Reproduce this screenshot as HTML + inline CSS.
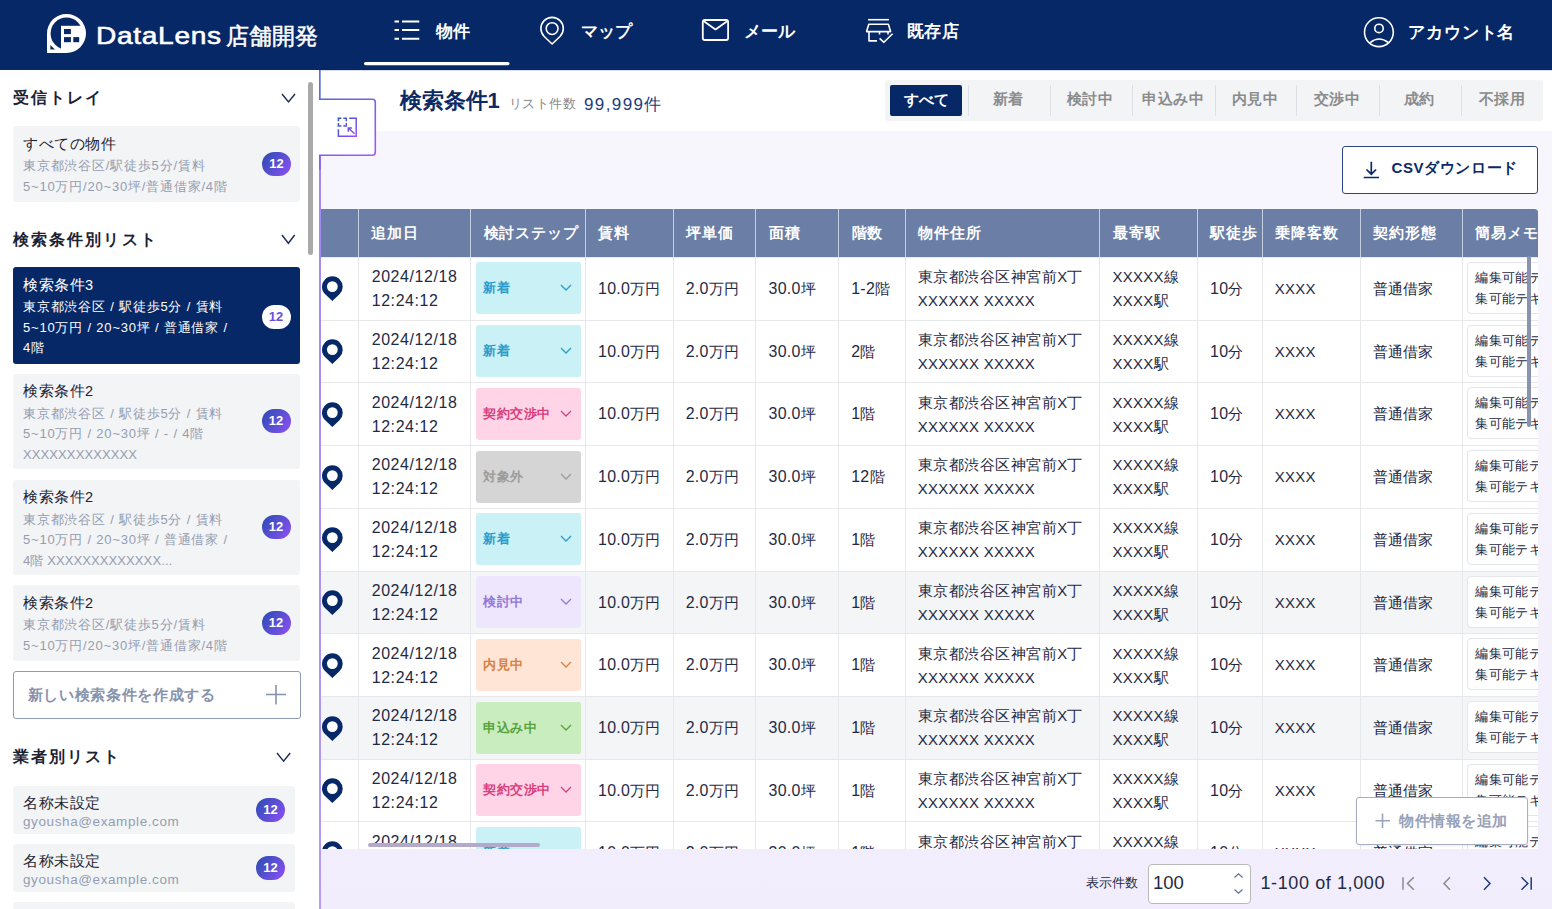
<!DOCTYPE html>
<html lang="ja">
<head>
<meta charset="utf-8">
<style>
*{box-sizing:border-box;margin:0;padding:0}
html,body{width:1552px;height:909px;overflow:hidden;background:#fff}
body{font-family:"Liberation Sans",sans-serif;color:#1f2a44;position:relative}
.abs{position:absolute}
/* header */
#hdr{position:absolute;left:0;top:0;width:1552px;height:70px;background:#062867}
#hdr .t{position:absolute;color:#fff;font-weight:bold;font-size:17px;line-height:20px;white-space:nowrap}
#hdr svg{position:absolute}
/* sidebar */
#side{position:absolute;left:0;top:70px;width:320px;height:839px;background:#fff;overflow:hidden}
.sh{position:absolute;left:13px;font-size:16px;font-weight:bold;color:#1b2233;letter-spacing:2.1px;line-height:20px;white-space:nowrap;margin-top:1px}
.chev{position:absolute}
.card{position:absolute;left:13px;width:287px;background:#f3f4f6;border-radius:3px}
.card .ct{position:absolute;left:10px;top:7.5px;font-size:14.5px;line-height:20px;color:#1e2533;white-space:nowrap;letter-spacing:0.5px}
.card .cl{position:absolute;left:10px;font-size:13px;line-height:20.5px;color:#939db1;white-space:nowrap;letter-spacing:0.8px}
.badge{position:absolute;width:29px;height:24px;border-radius:12px;background:linear-gradient(125deg,#2b4caf 0%,#5a4fd3 50%,#9050f8 100%);color:#fff;font-weight:bold;font-size:13px;line-height:24px;text-align:center}
.card.act{background:#062867}
.card.act .ct{color:#fff}
.card.act .cl{color:#fff}
.card.act .badge{background:#fff;color:#6b4fd8}
/* main */
#main{position:absolute;left:320px;top:70px;width:1232px;height:839px;background:linear-gradient(180deg,#f8f6fd 0px,#f8f6fd 70px,#f1edfc 839px);overflow:hidden}
.th{top:15.5px;font-size:14.5px;line-height:18px;font-weight:bold;color:#fff;white-space:nowrap;letter-spacing:0.8px}
.td{font-size:14.5px;line-height:22px;color:#1f2a44;white-space:nowrap;letter-spacing:0}
.td2{font-size:14.5px;line-height:24px;letter-spacing:0.5px;color:#1f2a44;white-space:nowrap}
.dt .l{letter-spacing:0.6px!important}
.l{font-size:1.1em}
.td .lx,.td2 .lx{font-size:1.03em;letter-spacing:0.2px}
.td .l,.td2 .l{letter-spacing:0.3px}
.pill{width:105px;height:52px;border-radius:3px;font-size:13px;font-weight:bold;line-height:52px;padding-left:7.5px;white-space:nowrap;letter-spacing:0.4px}
.memo{width:200px;height:52px;border:1.2px solid #e4e6ea;border-radius:4px;background:#fff;font-size:13px;line-height:21px;padding:4px 0 0 6.8px;color:#1f2a44;letter-spacing:0.4px;white-space:nowrap}
</style>
</head>
<body>
<div id="hdr">
<svg width="1552" height="70" style="left:0;top:0">
 <defs><clipPath id="lc"><circle cx="66.5" cy="33.4" r="18"/></clipPath></defs>
 <path d="M47,53.1 L47,33.4 A19.5,19.5 0 1 1 66.5,52.9 Z" fill="#fff"/>
 <circle cx="66.5" cy="33.4" r="15.9" fill="#062867"/>
 <rect x="61" y="25.8" width="30" height="30" fill="#fff" clip-path="url(#lc)"/>
 <rect x="64" y="29" width="6.9" height="5.1" fill="#062867"/>
 <rect x="64" y="37.1" width="6.9" height="5.1" fill="#062867"/>
 <rect x="73.3" y="37.1" width="5.9" height="5.1" fill="#062867"/>
 <path d="M50.4,45.1 L50.4,49.6 L54.9,49.6 Z" fill="#062867"/>
 <g stroke="#fff" stroke-width="2" fill="none">
  <path d="M394.5,21.5H399M402,21.5H419.3M394.5,30H399M402,30H419.3M394.5,38.7H399M402,38.7H419.3"/>
 </g>
 <rect x="364" y="62" width="145.5" height="3.2" rx="1.6" fill="#fff"/>
 <g stroke="#fff" stroke-width="1.6" fill="none">
  <path d="M552.1,44 L544.2,36.5 A11.2,11.2 0 1 1 560,36.5 Z" stroke-linejoin="round"/>
  <circle cx="552.1" cy="28.6" r="5.9"/>
 </g>
 <g stroke="#fff" stroke-width="1.8" fill="none" stroke-linejoin="round">
  <rect x="702.8" y="20" width="25.3" height="20" rx="2"/>
  <path d="M703.5,21 L715.5,29.4 L727.5,21"/>
 </g>
 <g stroke="#fff" stroke-width="1.6" fill="none" stroke-linejoin="round">
  <path d="M868,19.7H889"/>
  <path d="M868.8,24.3H888.4L890.6,31.6H866.6Z"/>
  <path d="M879.5,31.6V34.5M888,31.6V34.5"/>
  <path d="M869,31.6V40.9H877"/>
  <path d="M879.6,38.3L883.9,42.3L892.6,33.8"/>
 </g>
 <g stroke="#fff" stroke-width="1.6" fill="none">
  <circle cx="1378.9" cy="32.2" r="14.4"/>
  <circle cx="1379" cy="28.4" r="4.2"/>
  <path d="M1370.3,42.6 Q1379,35.5 1388.3,42.6"/>
 </g>
</svg>
<div class="t" style="left:96px;top:21.5px;font-size:24px;line-height:28px;letter-spacing:0.6px;font-weight:normal;-webkit-text-stroke:0.6px #fff;transform:scaleX(1.17);transform-origin:0 0">DataLens</div><div class="t" style="left:226px;top:23px;font-size:22.5px;line-height:28px;font-weight:normal;-webkit-text-stroke:0.5px #fff">店舗開発</div>
<div class="t" style="left:435.5px;top:22px;letter-spacing:0.3px">物件</div>
<div class="t" style="left:580.5px;top:21.5px;letter-spacing:0.3px">マップ</div>
<div class="t" style="left:744px;top:21.5px;letter-spacing:0.2px">メール</div>
<div class="t" style="left:906.5px;top:21.5px;letter-spacing:0.6px">既存店</div>
<div class="t" style="left:1408px;top:22.5px;letter-spacing:0.9px">アカウント名</div>
</div>
<div id="side">
<div class="abs" style="left:307.5px;top:12px;width:5.5px;height:172.5px;border-radius:3px;background:#a9a9a9"></div>
<div class="sh" style="top:17px">受信トレイ</div>
<svg class="chev" style="left:280px;top:21.6px" width="17" height="12.0"><path d="M2,2 L8.5,10.0 L15,2" stroke="#1b2a55" stroke-width="1.4" fill="none"/></svg>
<div class="card" style="top:56px;height:75.6px"><div class="ct">すべての物件</div>
<div class="cl" style="top:30px">東京都渋谷区/駅徒歩5分/賃料</div><div class="cl" style="top:51px">5~10万円/20~30坪/普通借家/4階</div>
<div class="badge" style="left:249px;top:26px">12</div></div>
<div class="sh" style="top:159px">検索条件別リスト</div>
<svg class="chev" style="left:280px;top:163px" width="16.69999999999999" height="12.300000000000011"><path d="M2,2 L8.349999999999994,10.300000000000011 L14.699999999999989,2" stroke="#1b2a55" stroke-width="1.4" fill="none"/></svg>
<div class="card act" style="top:197.4px;height:96.3px"><div class="ct">検索条件3</div>
<div class="cl" style="top:30px">東京都渋谷区 / 駅徒歩5分 / 賃料</div><div class="cl" style="top:50.5px">5~10万円 / 20~30坪 / 普通借家 /</div><div class="cl" style="top:71px">4階</div>
<div class="badge" style="left:248.5px;top:37.6px">12</div></div>
<div class="card" style="top:303.9px;height:95px"><div class="ct">検索条件2</div>
<div class="cl" style="top:30px">東京都渋谷区 / 駅徒歩5分 / 賃料</div><div class="cl" style="top:50.5px">5~10万円 / 20~30坪 / - / 4階</div><div class="cl" style="top:71px;letter-spacing:0.1px">XXXXXXXXXXXXX</div>
<div class="badge" style="left:248.5px;top:35.6px">12</div></div>
<div class="card" style="top:409.5px;height:95.7px"><div class="ct">検索条件2</div>
<div class="cl" style="top:30px">東京都渋谷区 / 駅徒歩5分 / 賃料</div><div class="cl" style="top:50.5px">5~10万円 / 20~30坪 / 普通借家 /</div><div class="cl" style="top:71px;letter-spacing:0.1px">4階 XXXXXXXXXXXXX...</div>
<div class="badge" style="left:248.5px;top:35.6px">12</div></div>
<div class="card" style="top:515.4px;height:75.6px"><div class="ct">検索条件2</div>
<div class="cl" style="top:30px">東京都渋谷区/駅徒歩5分/賃料</div><div class="cl" style="top:51px">5~10万円/20~30坪/普通借家/4階</div>
<div class="badge" style="left:248.5px;top:26px">12</div></div>
<div class="abs" style="left:13px;top:601px;width:287.5px;height:48px;border:1.3px solid #8c9ab5;border-radius:3px"></div>
<div class="abs" style="left:27.5px;top:615px;font-size:14.5px;line-height:20px;color:#8792ab;font-weight:bold;letter-spacing:0.7px;white-space:nowrap">新しい検索条件を作成する</div>
<svg class="abs" style="left:264px;top:613px" width="24" height="24"><path d="M12,2V21.5M2,11.5H22" stroke="#8592ad" stroke-width="1.6" fill="none"/></svg>
<div class="sh" style="top:676px">業者別リスト</div>
<svg class="chev" style="left:274.7px;top:680.6px" width="17.19999999999999" height="12.199999999999932"><path d="M2,2 L8.599999999999994,10.199999999999932 L15.199999999999989,2" stroke="#1b2a55" stroke-width="1.4" fill="none"/></svg>
<div class="card" style="top:715.5px;width:282px;height:48.3px"><div class="ct" style="top:7px">名称未設定</div>
<div class="cl" style="top:26px;font-size:13.5px;letter-spacing:0.6px">gyousha@example.com</div>
<div class="badge" style="left:243px;top:12px">12</div></div>
<div class="card" style="top:774.1px;width:282px;height:48.3px"><div class="ct" style="top:7px">名称未設定</div>
<div class="cl" style="top:26px;font-size:13.5px;letter-spacing:0.6px">gyousha@example.com</div>
<div class="badge" style="left:243px;top:12px">12</div></div>
<div class="card" style="top:832px;width:282px;height:48.3px"><div class="ct" style="top:7px">名称未設定</div>
<div class="cl" style="top:26px;font-size:13.5px;letter-spacing:0.6px">gyousha@example.com</div>
<div class="badge" style="left:243px;top:12px">12</div></div>
</div>
<div id="main">
<div class="abs" style="left:0;top:0;width:1232px;height:60.8px;background:#fff"></div>
<div class="abs" style="left:0;top:0;width:1232px;height:1px;background:#d9dce6"></div>



<div class="abs" style="left:79.5px;top:18px;font-size:22px;line-height:26px;font-weight:bold;color:#0b2a66;white-space:nowrap">検索条件1</div>
<div class="abs" style="left:188.5px;top:25.5px;font-size:13px;line-height:16px;color:#8a8a8a;letter-spacing:0.5px;white-space:nowrap">リスト件数</div>
<div class="abs" style="left:264px;top:25px;font-size:17px;line-height:20px;color:#1d3b7c;letter-spacing:1.4px;white-space:nowrap">99,999件</div>
<div class="abs" style="left:565px;top:10px;width:658px;height:41px;background:#f3f4f6;border-radius:3px"></div>
<div class="abs" style="left:647.5px;top:15px;width:1px;height:31px;background:#dde0e6"></div>
<div class="abs" style="left:730px;top:15px;width:1px;height:31px;background:#dde0e6"></div>
<div class="abs" style="left:812px;top:15px;width:1px;height:31px;background:#dde0e6"></div>
<div class="abs" style="left:895px;top:15px;width:1px;height:31px;background:#dde0e6"></div>
<div class="abs" style="left:976px;top:15px;width:1px;height:31px;background:#dde0e6"></div>
<div class="abs" style="left:1059px;top:15px;width:1px;height:31px;background:#dde0e6"></div>
<div class="abs" style="left:1141px;top:15px;width:1px;height:31px;background:#dde0e6"></div>
<div class="abs" style="left:570px;top:14.5px;width:72px;height:31.5px;background:#062867;border-radius:2px;color:#fff;font-weight:bold;font-size:15px;line-height:29.5px;text-align:center">すべて</div>
<div class="abs" style="left:638px;top:14.5px;width:100px;height:31.5px;color:#8b8b8b;font-weight:bold;font-size:14.5px;line-height:29.5px;letter-spacing:0.5px;text-align:center">新着</div>
<div class="abs" style="left:720px;top:14.5px;width:100px;height:31.5px;color:#8b8b8b;font-weight:bold;font-size:14.5px;line-height:29.5px;letter-spacing:0.5px;text-align:center">検討中</div>
<div class="abs" style="left:803px;top:14.5px;width:100px;height:31.5px;color:#8b8b8b;font-weight:bold;font-size:14.5px;line-height:29.5px;letter-spacing:0.5px;text-align:center">申込み中</div>
<div class="abs" style="left:885px;top:14.5px;width:100px;height:31.5px;color:#8b8b8b;font-weight:bold;font-size:14.5px;line-height:29.5px;letter-spacing:0.5px;text-align:center">内見中</div>
<div class="abs" style="left:967px;top:14.5px;width:100px;height:31.5px;color:#8b8b8b;font-weight:bold;font-size:14.5px;line-height:29.5px;letter-spacing:0.5px;text-align:center">交渉中</div>
<div class="abs" style="left:1049px;top:14.5px;width:100px;height:31.5px;color:#8b8b8b;font-weight:bold;font-size:14.5px;line-height:29.5px;letter-spacing:0.5px;text-align:center">成約</div>
<div class="abs" style="left:1132px;top:14.5px;width:100px;height:31.5px;color:#8b8b8b;font-weight:bold;font-size:14.5px;line-height:29.5px;letter-spacing:0.5px;text-align:center">不採用</div>
<div class="abs" style="left:1022.4px;top:75.7px;width:195.8px;height:48.2px;background:#fff;border:1.5px solid #2d4682;border-radius:3px"></div>
<svg class="abs" style="left:1043px;top:91px" width="18" height="18"><g fill="none" stroke="#0b2a66" stroke-width="1.7"><path d="M8.3,0.7V13M3.5,8.5L8.3,13.2L13.1,8.5M0.7,16.5H16"/></g></svg>
<div class="abs" style="left:1071.5px;top:88px;font-size:15px;line-height:20px;font-weight:bold;color:#0b2a66;letter-spacing:0.6px;white-space:nowrap">CSVダウンロード</div>
<div id="tbl" class="abs" style="left:0.8000000000000114px;top:138.8px;width:1217.7px;height:640.5px;overflow:hidden;border-top-right-radius:3.5px;background:#fff">
<div class="abs" style="left:0;top:0;width:1400px;height:48.2px;background:#6a7ea6"></div>
<div class="abs" style="left:36.89999999999998px;top:0;width:1px;height:48.2px;background:#c5cde0"></div>
<div class="abs" style="left:149.39999999999998px;top:0;width:1px;height:48.2px;background:#c5cde0"></div>
<div class="abs" style="left:264.2px;top:0;width:1px;height:48.2px;background:#c5cde0"></div>
<div class="abs" style="left:351.90000000000003px;top:0;width:1px;height:48.2px;background:#c5cde0"></div>
<div class="abs" style="left:434.7px;top:0;width:1px;height:48.2px;background:#c5cde0"></div>
<div class="abs" style="left:517.4000000000001px;top:0;width:1px;height:48.2px;background:#c5cde0"></div>
<div class="abs" style="left:583.9000000000001px;top:0;width:1px;height:48.2px;background:#c5cde0"></div>
<div class="abs" style="left:778.7px;top:0;width:1px;height:48.2px;background:#c5cde0"></div>
<div class="abs" style="left:876.2px;top:0;width:1px;height:48.2px;background:#c5cde0"></div>
<div class="abs" style="left:940.9000000000001px;top:0;width:1px;height:48.2px;background:#c5cde0"></div>
<div class="abs" style="left:1039.2px;top:0;width:1px;height:48.2px;background:#c5cde0"></div>
<div class="abs" style="left:1140.9px;top:0;width:1px;height:48.2px;background:#c5cde0"></div>
<div class="th abs" style="left:50.39999999999998px">追加日</div>
<div class="th abs" style="left:162.89999999999998px">検討ステップ</div>
<div class="th abs" style="left:277.7px">賃料</div>
<div class="th abs" style="left:365.40000000000003px">坪単価</div>
<div class="th abs" style="left:448.2px">面積</div>
<div class="th abs" style="left:530.9000000000001px">階数</div>
<div class="th abs" style="left:597.4000000000001px">物件住所</div>
<div class="th abs" style="left:792.2px">最寄駅</div>
<div class="th abs" style="left:889.7px">駅徒歩</div>
<div class="th abs" style="left:954.4000000000001px">乗降客数</div>
<div class="th abs" style="left:1052.7px">契約形態</div>
<div class="th abs" style="left:1154.4px">簡易メモ</div>
<div class="abs" style="left:0;top:48.2px;width:1400px;height:62.72px;background:#fff;border-top:1px solid #e6e8ec"></div>
<div class="abs" style="left:36.89999999999998px;top:48.2px;width:1px;height:62.72px;background:#e6e8ec"></div>
<div class="abs" style="left:149.39999999999998px;top:48.2px;width:1px;height:62.72px;background:#e6e8ec"></div>
<div class="abs" style="left:264.2px;top:48.2px;width:1px;height:62.72px;background:#e6e8ec"></div>
<div class="abs" style="left:351.90000000000003px;top:48.2px;width:1px;height:62.72px;background:#e6e8ec"></div>
<div class="abs" style="left:434.7px;top:48.2px;width:1px;height:62.72px;background:#e6e8ec"></div>
<div class="abs" style="left:517.4000000000001px;top:48.2px;width:1px;height:62.72px;background:#e6e8ec"></div>
<div class="abs" style="left:583.9000000000001px;top:48.2px;width:1px;height:62.72px;background:#e6e8ec"></div>
<div class="abs" style="left:778.7px;top:48.2px;width:1px;height:62.72px;background:#e6e8ec"></div>
<div class="abs" style="left:876.2px;top:48.2px;width:1px;height:62.72px;background:#e6e8ec"></div>
<div class="abs" style="left:940.9000000000001px;top:48.2px;width:1px;height:62.72px;background:#e6e8ec"></div>
<div class="abs" style="left:1039.2px;top:48.2px;width:1px;height:62.72px;background:#e6e8ec"></div>
<div class="abs" style="left:1140.9px;top:48.2px;width:1px;height:62.72px;background:#e6e8ec"></div>
<svg class="abs" style="left:1.1999999999999886px;top:67.7px" width="22" height="26"><path d="M10.35,24.96 L3.24,18.23 A10.35,10.35 0 1 1 17.46,18.23 Z" fill="#062867"/><circle cx="10.35" cy="10.6" r="5.4" fill="#fff"/></svg>
<div class="td2 abs" style="left:50.89999999999998px;top:56.5px"><span class="dt"><span class="l">2024/12/18</span><br><span class="l">12:24:12</span></span></div>
<div class="pill abs" style="left:155.2px;top:53.7px;background:#c9f1f6;color:#2b9ccb">新着<svg width="12" height="8" style="position:absolute;left:84px;top:22px"><path d="M1,1L6,6L11,1" stroke="#2b9ccb" stroke-width="1.3" fill="none"/></svg></div>
<div class="td abs" style="left:277.2px;top:69.2px"><span class="l">10.0</span>万円</div>
<div class="td abs" style="left:364.90000000000003px;top:69.2px"><span class="l">2.0</span>万円</div>
<div class="td abs" style="left:447.7px;top:69.2px"><span class="l">30.0</span>坪</div>
<div class="td abs" style="left:530.4000000000001px;top:69.2px"><span class="l">1-2</span>階</div>
<div class="td abs" style="left:889.2px;top:69.2px"><span class="l">10</span>分</div>
<div class="td abs" style="left:953.9000000000001px;top:69.2px"><span class="l lx">XXXX</span></div>
<div class="td abs" style="left:1052.2px;top:69.2px">普通借家</div>
<div class="td2 abs" style="left:596.9000000000001px;top:56.5px">東京都渋谷区神宮前<span class="l lx">X</span>丁<br><span class="l lx">XXXXXX XXXXX</span></div>
<div class="td2 abs" style="left:791.7px;top:56.5px"><span class="l lx">XXXXX</span>線<br><span class="l lx">XXXX</span>駅</div>
<div class="memo abs" style="left:1146.6000000000001px;top:53.2px">編集可能テキスト編<br>集可能テキスト</div>
<div class="abs" style="left:0;top:110.92px;width:1400px;height:62.72px;background:#fff;border-top:1px solid #e6e8ec"></div>
<div class="abs" style="left:36.89999999999998px;top:110.92px;width:1px;height:62.72px;background:#e6e8ec"></div>
<div class="abs" style="left:149.39999999999998px;top:110.92px;width:1px;height:62.72px;background:#e6e8ec"></div>
<div class="abs" style="left:264.2px;top:110.92px;width:1px;height:62.72px;background:#e6e8ec"></div>
<div class="abs" style="left:351.90000000000003px;top:110.92px;width:1px;height:62.72px;background:#e6e8ec"></div>
<div class="abs" style="left:434.7px;top:110.92px;width:1px;height:62.72px;background:#e6e8ec"></div>
<div class="abs" style="left:517.4000000000001px;top:110.92px;width:1px;height:62.72px;background:#e6e8ec"></div>
<div class="abs" style="left:583.9000000000001px;top:110.92px;width:1px;height:62.72px;background:#e6e8ec"></div>
<div class="abs" style="left:778.7px;top:110.92px;width:1px;height:62.72px;background:#e6e8ec"></div>
<div class="abs" style="left:876.2px;top:110.92px;width:1px;height:62.72px;background:#e6e8ec"></div>
<div class="abs" style="left:940.9000000000001px;top:110.92px;width:1px;height:62.72px;background:#e6e8ec"></div>
<div class="abs" style="left:1039.2px;top:110.92px;width:1px;height:62.72px;background:#e6e8ec"></div>
<div class="abs" style="left:1140.9px;top:110.92px;width:1px;height:62.72px;background:#e6e8ec"></div>
<svg class="abs" style="left:1.1999999999999886px;top:130.42000000000002px" width="22" height="26"><path d="M10.35,24.96 L3.24,18.23 A10.35,10.35 0 1 1 17.46,18.23 Z" fill="#062867"/><circle cx="10.35" cy="10.6" r="5.4" fill="#fff"/></svg>
<div class="td2 abs" style="left:50.89999999999998px;top:119.22px"><span class="dt"><span class="l">2024/12/18</span><br><span class="l">12:24:12</span></span></div>
<div class="pill abs" style="left:155.2px;top:116.42px;background:#c9f1f6;color:#2b9ccb">新着<svg width="12" height="8" style="position:absolute;left:84px;top:22px"><path d="M1,1L6,6L11,1" stroke="#2b9ccb" stroke-width="1.3" fill="none"/></svg></div>
<div class="td abs" style="left:277.2px;top:131.92px"><span class="l">10.0</span>万円</div>
<div class="td abs" style="left:364.90000000000003px;top:131.92px"><span class="l">2.0</span>万円</div>
<div class="td abs" style="left:447.7px;top:131.92px"><span class="l">30.0</span>坪</div>
<div class="td abs" style="left:530.4000000000001px;top:131.92px"><span class="l">2</span>階</div>
<div class="td abs" style="left:889.2px;top:131.92px"><span class="l">10</span>分</div>
<div class="td abs" style="left:953.9000000000001px;top:131.92px"><span class="l lx">XXXX</span></div>
<div class="td abs" style="left:1052.2px;top:131.92px">普通借家</div>
<div class="td2 abs" style="left:596.9000000000001px;top:119.22px">東京都渋谷区神宮前<span class="l lx">X</span>丁<br><span class="l lx">XXXXXX XXXXX</span></div>
<div class="td2 abs" style="left:791.7px;top:119.22px"><span class="l lx">XXXXX</span>線<br><span class="l lx">XXXX</span>駅</div>
<div class="memo abs" style="left:1146.6000000000001px;top:115.92px">編集可能テキスト編<br>集可能テキスト</div>
<div class="abs" style="left:0;top:173.64px;width:1400px;height:62.72px;background:#fff;border-top:1px solid #e6e8ec"></div>
<div class="abs" style="left:36.89999999999998px;top:173.64px;width:1px;height:62.72px;background:#e6e8ec"></div>
<div class="abs" style="left:149.39999999999998px;top:173.64px;width:1px;height:62.72px;background:#e6e8ec"></div>
<div class="abs" style="left:264.2px;top:173.64px;width:1px;height:62.72px;background:#e6e8ec"></div>
<div class="abs" style="left:351.90000000000003px;top:173.64px;width:1px;height:62.72px;background:#e6e8ec"></div>
<div class="abs" style="left:434.7px;top:173.64px;width:1px;height:62.72px;background:#e6e8ec"></div>
<div class="abs" style="left:517.4000000000001px;top:173.64px;width:1px;height:62.72px;background:#e6e8ec"></div>
<div class="abs" style="left:583.9000000000001px;top:173.64px;width:1px;height:62.72px;background:#e6e8ec"></div>
<div class="abs" style="left:778.7px;top:173.64px;width:1px;height:62.72px;background:#e6e8ec"></div>
<div class="abs" style="left:876.2px;top:173.64px;width:1px;height:62.72px;background:#e6e8ec"></div>
<div class="abs" style="left:940.9000000000001px;top:173.64px;width:1px;height:62.72px;background:#e6e8ec"></div>
<div class="abs" style="left:1039.2px;top:173.64px;width:1px;height:62.72px;background:#e6e8ec"></div>
<div class="abs" style="left:1140.9px;top:173.64px;width:1px;height:62.72px;background:#e6e8ec"></div>
<svg class="abs" style="left:1.1999999999999886px;top:193.14px" width="22" height="26"><path d="M10.35,24.96 L3.24,18.23 A10.35,10.35 0 1 1 17.46,18.23 Z" fill="#062867"/><circle cx="10.35" cy="10.6" r="5.4" fill="#fff"/></svg>
<div class="td2 abs" style="left:50.89999999999998px;top:181.94px"><span class="dt"><span class="l">2024/12/18</span><br><span class="l">12:24:12</span></span></div>
<div class="pill abs" style="left:155.2px;top:179.14px;background:#ffd4e6;color:#d8407f">契約交渉中<svg width="12" height="8" style="position:absolute;left:84px;top:22px"><path d="M1,1L6,6L11,1" stroke="#d8407f" stroke-width="1.3" fill="none"/></svg></div>
<div class="td abs" style="left:277.2px;top:194.64px"><span class="l">10.0</span>万円</div>
<div class="td abs" style="left:364.90000000000003px;top:194.64px"><span class="l">2.0</span>万円</div>
<div class="td abs" style="left:447.7px;top:194.64px"><span class="l">30.0</span>坪</div>
<div class="td abs" style="left:530.4000000000001px;top:194.64px"><span class="l">1</span>階</div>
<div class="td abs" style="left:889.2px;top:194.64px"><span class="l">10</span>分</div>
<div class="td abs" style="left:953.9000000000001px;top:194.64px"><span class="l lx">XXXX</span></div>
<div class="td abs" style="left:1052.2px;top:194.64px">普通借家</div>
<div class="td2 abs" style="left:596.9000000000001px;top:181.94px">東京都渋谷区神宮前<span class="l lx">X</span>丁<br><span class="l lx">XXXXXX XXXXX</span></div>
<div class="td2 abs" style="left:791.7px;top:181.94px"><span class="l lx">XXXXX</span>線<br><span class="l lx">XXXX</span>駅</div>
<div class="memo abs" style="left:1146.6000000000001px;top:178.64px">編集可能テキスト編<br>集可能テキスト</div>
<div class="abs" style="left:0;top:236.36px;width:1400px;height:62.72px;background:#fff;border-top:1px solid #e6e8ec"></div>
<div class="abs" style="left:36.89999999999998px;top:236.36px;width:1px;height:62.72px;background:#e6e8ec"></div>
<div class="abs" style="left:149.39999999999998px;top:236.36px;width:1px;height:62.72px;background:#e6e8ec"></div>
<div class="abs" style="left:264.2px;top:236.36px;width:1px;height:62.72px;background:#e6e8ec"></div>
<div class="abs" style="left:351.90000000000003px;top:236.36px;width:1px;height:62.72px;background:#e6e8ec"></div>
<div class="abs" style="left:434.7px;top:236.36px;width:1px;height:62.72px;background:#e6e8ec"></div>
<div class="abs" style="left:517.4000000000001px;top:236.36px;width:1px;height:62.72px;background:#e6e8ec"></div>
<div class="abs" style="left:583.9000000000001px;top:236.36px;width:1px;height:62.72px;background:#e6e8ec"></div>
<div class="abs" style="left:778.7px;top:236.36px;width:1px;height:62.72px;background:#e6e8ec"></div>
<div class="abs" style="left:876.2px;top:236.36px;width:1px;height:62.72px;background:#e6e8ec"></div>
<div class="abs" style="left:940.9000000000001px;top:236.36px;width:1px;height:62.72px;background:#e6e8ec"></div>
<div class="abs" style="left:1039.2px;top:236.36px;width:1px;height:62.72px;background:#e6e8ec"></div>
<div class="abs" style="left:1140.9px;top:236.36px;width:1px;height:62.72px;background:#e6e8ec"></div>
<svg class="abs" style="left:1.1999999999999886px;top:255.86px" width="22" height="26"><path d="M10.35,24.96 L3.24,18.23 A10.35,10.35 0 1 1 17.46,18.23 Z" fill="#062867"/><circle cx="10.35" cy="10.6" r="5.4" fill="#fff"/></svg>
<div class="td2 abs" style="left:50.89999999999998px;top:244.66px"><span class="dt"><span class="l">2024/12/18</span><br><span class="l">12:24:12</span></span></div>
<div class="pill abs" style="left:155.2px;top:241.86px;background:#d5d5d5;color:#9b9b9b">対象外<svg width="12" height="8" style="position:absolute;left:84px;top:22px"><path d="M1,1L6,6L11,1" stroke="#9b9b9b" stroke-width="1.3" fill="none"/></svg></div>
<div class="td abs" style="left:277.2px;top:257.36px"><span class="l">10.0</span>万円</div>
<div class="td abs" style="left:364.90000000000003px;top:257.36px"><span class="l">2.0</span>万円</div>
<div class="td abs" style="left:447.7px;top:257.36px"><span class="l">30.0</span>坪</div>
<div class="td abs" style="left:530.4000000000001px;top:257.36px"><span class="l">12</span>階</div>
<div class="td abs" style="left:889.2px;top:257.36px"><span class="l">10</span>分</div>
<div class="td abs" style="left:953.9000000000001px;top:257.36px"><span class="l lx">XXXX</span></div>
<div class="td abs" style="left:1052.2px;top:257.36px">普通借家</div>
<div class="td2 abs" style="left:596.9000000000001px;top:244.66px">東京都渋谷区神宮前<span class="l lx">X</span>丁<br><span class="l lx">XXXXXX XXXXX</span></div>
<div class="td2 abs" style="left:791.7px;top:244.66px"><span class="l lx">XXXXX</span>線<br><span class="l lx">XXXX</span>駅</div>
<div class="memo abs" style="left:1146.6000000000001px;top:241.36px">編集可能テキスト編<br>集可能テキスト</div>
<div class="abs" style="left:0;top:299.08px;width:1400px;height:62.72px;background:#fff;border-top:1px solid #e6e8ec"></div>
<div class="abs" style="left:36.89999999999998px;top:299.08px;width:1px;height:62.72px;background:#e6e8ec"></div>
<div class="abs" style="left:149.39999999999998px;top:299.08px;width:1px;height:62.72px;background:#e6e8ec"></div>
<div class="abs" style="left:264.2px;top:299.08px;width:1px;height:62.72px;background:#e6e8ec"></div>
<div class="abs" style="left:351.90000000000003px;top:299.08px;width:1px;height:62.72px;background:#e6e8ec"></div>
<div class="abs" style="left:434.7px;top:299.08px;width:1px;height:62.72px;background:#e6e8ec"></div>
<div class="abs" style="left:517.4000000000001px;top:299.08px;width:1px;height:62.72px;background:#e6e8ec"></div>
<div class="abs" style="left:583.9000000000001px;top:299.08px;width:1px;height:62.72px;background:#e6e8ec"></div>
<div class="abs" style="left:778.7px;top:299.08px;width:1px;height:62.72px;background:#e6e8ec"></div>
<div class="abs" style="left:876.2px;top:299.08px;width:1px;height:62.72px;background:#e6e8ec"></div>
<div class="abs" style="left:940.9000000000001px;top:299.08px;width:1px;height:62.72px;background:#e6e8ec"></div>
<div class="abs" style="left:1039.2px;top:299.08px;width:1px;height:62.72px;background:#e6e8ec"></div>
<div class="abs" style="left:1140.9px;top:299.08px;width:1px;height:62.72px;background:#e6e8ec"></div>
<svg class="abs" style="left:1.1999999999999886px;top:318.58px" width="22" height="26"><path d="M10.35,24.96 L3.24,18.23 A10.35,10.35 0 1 1 17.46,18.23 Z" fill="#062867"/><circle cx="10.35" cy="10.6" r="5.4" fill="#fff"/></svg>
<div class="td2 abs" style="left:50.89999999999998px;top:307.38px"><span class="dt"><span class="l">2024/12/18</span><br><span class="l">12:24:12</span></span></div>
<div class="pill abs" style="left:155.2px;top:304.58px;background:#c9f1f6;color:#2b9ccb">新着<svg width="12" height="8" style="position:absolute;left:84px;top:22px"><path d="M1,1L6,6L11,1" stroke="#2b9ccb" stroke-width="1.3" fill="none"/></svg></div>
<div class="td abs" style="left:277.2px;top:320.08px"><span class="l">10.0</span>万円</div>
<div class="td abs" style="left:364.90000000000003px;top:320.08px"><span class="l">2.0</span>万円</div>
<div class="td abs" style="left:447.7px;top:320.08px"><span class="l">30.0</span>坪</div>
<div class="td abs" style="left:530.4000000000001px;top:320.08px"><span class="l">1</span>階</div>
<div class="td abs" style="left:889.2px;top:320.08px"><span class="l">10</span>分</div>
<div class="td abs" style="left:953.9000000000001px;top:320.08px"><span class="l lx">XXXX</span></div>
<div class="td abs" style="left:1052.2px;top:320.08px">普通借家</div>
<div class="td2 abs" style="left:596.9000000000001px;top:307.38px">東京都渋谷区神宮前<span class="l lx">X</span>丁<br><span class="l lx">XXXXXX XXXXX</span></div>
<div class="td2 abs" style="left:791.7px;top:307.38px"><span class="l lx">XXXXX</span>線<br><span class="l lx">XXXX</span>駅</div>
<div class="memo abs" style="left:1146.6000000000001px;top:304.08px">編集可能テキスト編<br>集可能テキスト</div>
<div class="abs" style="left:0;top:361.8px;width:1400px;height:62.72px;background:#f4f5f7;border-top:1px solid #e6e8ec"></div>
<div class="abs" style="left:36.89999999999998px;top:361.8px;width:1px;height:62.72px;background:#e6e8ec"></div>
<div class="abs" style="left:149.39999999999998px;top:361.8px;width:1px;height:62.72px;background:#e6e8ec"></div>
<div class="abs" style="left:264.2px;top:361.8px;width:1px;height:62.72px;background:#e6e8ec"></div>
<div class="abs" style="left:351.90000000000003px;top:361.8px;width:1px;height:62.72px;background:#e6e8ec"></div>
<div class="abs" style="left:434.7px;top:361.8px;width:1px;height:62.72px;background:#e6e8ec"></div>
<div class="abs" style="left:517.4000000000001px;top:361.8px;width:1px;height:62.72px;background:#e6e8ec"></div>
<div class="abs" style="left:583.9000000000001px;top:361.8px;width:1px;height:62.72px;background:#e6e8ec"></div>
<div class="abs" style="left:778.7px;top:361.8px;width:1px;height:62.72px;background:#e6e8ec"></div>
<div class="abs" style="left:876.2px;top:361.8px;width:1px;height:62.72px;background:#e6e8ec"></div>
<div class="abs" style="left:940.9000000000001px;top:361.8px;width:1px;height:62.72px;background:#e6e8ec"></div>
<div class="abs" style="left:1039.2px;top:361.8px;width:1px;height:62.72px;background:#e6e8ec"></div>
<div class="abs" style="left:1140.9px;top:361.8px;width:1px;height:62.72px;background:#e6e8ec"></div>
<svg class="abs" style="left:1.1999999999999886px;top:381.3px" width="22" height="26"><path d="M10.35,24.96 L3.24,18.23 A10.35,10.35 0 1 1 17.46,18.23 Z" fill="#062867"/><circle cx="10.35" cy="10.6" r="5.4" fill="#fff"/></svg>
<div class="td2 abs" style="left:50.89999999999998px;top:370.1px"><span class="dt"><span class="l">2024/12/18</span><br><span class="l">12:24:12</span></span></div>
<div class="pill abs" style="left:155.2px;top:367.3px;background:#eee6fd;color:#9379d6">検討中<svg width="12" height="8" style="position:absolute;left:84px;top:22px"><path d="M1,1L6,6L11,1" stroke="#9379d6" stroke-width="1.3" fill="none"/></svg></div>
<div class="td abs" style="left:277.2px;top:382.8px"><span class="l">10.0</span>万円</div>
<div class="td abs" style="left:364.90000000000003px;top:382.8px"><span class="l">2.0</span>万円</div>
<div class="td abs" style="left:447.7px;top:382.8px"><span class="l">30.0</span>坪</div>
<div class="td abs" style="left:530.4000000000001px;top:382.8px"><span class="l">1</span>階</div>
<div class="td abs" style="left:889.2px;top:382.8px"><span class="l">10</span>分</div>
<div class="td abs" style="left:953.9000000000001px;top:382.8px"><span class="l lx">XXXX</span></div>
<div class="td abs" style="left:1052.2px;top:382.8px">普通借家</div>
<div class="td2 abs" style="left:596.9000000000001px;top:370.1px">東京都渋谷区神宮前<span class="l lx">X</span>丁<br><span class="l lx">XXXXXX XXXXX</span></div>
<div class="td2 abs" style="left:791.7px;top:370.1px"><span class="l lx">XXXXX</span>線<br><span class="l lx">XXXX</span>駅</div>
<div class="memo abs" style="left:1146.6000000000001px;top:366.8px">編集可能テキスト編<br>集可能テキスト</div>
<div class="abs" style="left:0;top:424.52px;width:1400px;height:62.72px;background:#fff;border-top:1px solid #e6e8ec"></div>
<div class="abs" style="left:36.89999999999998px;top:424.52px;width:1px;height:62.72px;background:#e6e8ec"></div>
<div class="abs" style="left:149.39999999999998px;top:424.52px;width:1px;height:62.72px;background:#e6e8ec"></div>
<div class="abs" style="left:264.2px;top:424.52px;width:1px;height:62.72px;background:#e6e8ec"></div>
<div class="abs" style="left:351.90000000000003px;top:424.52px;width:1px;height:62.72px;background:#e6e8ec"></div>
<div class="abs" style="left:434.7px;top:424.52px;width:1px;height:62.72px;background:#e6e8ec"></div>
<div class="abs" style="left:517.4000000000001px;top:424.52px;width:1px;height:62.72px;background:#e6e8ec"></div>
<div class="abs" style="left:583.9000000000001px;top:424.52px;width:1px;height:62.72px;background:#e6e8ec"></div>
<div class="abs" style="left:778.7px;top:424.52px;width:1px;height:62.72px;background:#e6e8ec"></div>
<div class="abs" style="left:876.2px;top:424.52px;width:1px;height:62.72px;background:#e6e8ec"></div>
<div class="abs" style="left:940.9000000000001px;top:424.52px;width:1px;height:62.72px;background:#e6e8ec"></div>
<div class="abs" style="left:1039.2px;top:424.52px;width:1px;height:62.72px;background:#e6e8ec"></div>
<div class="abs" style="left:1140.9px;top:424.52px;width:1px;height:62.72px;background:#e6e8ec"></div>
<svg class="abs" style="left:1.1999999999999886px;top:444.02px" width="22" height="26"><path d="M10.35,24.96 L3.24,18.23 A10.35,10.35 0 1 1 17.46,18.23 Z" fill="#062867"/><circle cx="10.35" cy="10.6" r="5.4" fill="#fff"/></svg>
<div class="td2 abs" style="left:50.89999999999998px;top:432.82px"><span class="dt"><span class="l">2024/12/18</span><br><span class="l">12:24:12</span></span></div>
<div class="pill abs" style="left:155.2px;top:430.02px;background:#ffe5d5;color:#d8813f">内見中<svg width="12" height="8" style="position:absolute;left:84px;top:22px"><path d="M1,1L6,6L11,1" stroke="#d8813f" stroke-width="1.3" fill="none"/></svg></div>
<div class="td abs" style="left:277.2px;top:445.52px"><span class="l">10.0</span>万円</div>
<div class="td abs" style="left:364.90000000000003px;top:445.52px"><span class="l">2.0</span>万円</div>
<div class="td abs" style="left:447.7px;top:445.52px"><span class="l">30.0</span>坪</div>
<div class="td abs" style="left:530.4000000000001px;top:445.52px"><span class="l">1</span>階</div>
<div class="td abs" style="left:889.2px;top:445.52px"><span class="l">10</span>分</div>
<div class="td abs" style="left:953.9000000000001px;top:445.52px"><span class="l lx">XXXX</span></div>
<div class="td abs" style="left:1052.2px;top:445.52px">普通借家</div>
<div class="td2 abs" style="left:596.9000000000001px;top:432.82px">東京都渋谷区神宮前<span class="l lx">X</span>丁<br><span class="l lx">XXXXXX XXXXX</span></div>
<div class="td2 abs" style="left:791.7px;top:432.82px"><span class="l lx">XXXXX</span>線<br><span class="l lx">XXXX</span>駅</div>
<div class="memo abs" style="left:1146.6000000000001px;top:429.52px">編集可能テキスト編<br>集可能テキスト</div>
<div class="abs" style="left:0;top:487.23999999999995px;width:1400px;height:62.72px;background:#f4f5f7;border-top:1px solid #e6e8ec"></div>
<div class="abs" style="left:36.89999999999998px;top:487.23999999999995px;width:1px;height:62.72px;background:#e6e8ec"></div>
<div class="abs" style="left:149.39999999999998px;top:487.23999999999995px;width:1px;height:62.72px;background:#e6e8ec"></div>
<div class="abs" style="left:264.2px;top:487.23999999999995px;width:1px;height:62.72px;background:#e6e8ec"></div>
<div class="abs" style="left:351.90000000000003px;top:487.23999999999995px;width:1px;height:62.72px;background:#e6e8ec"></div>
<div class="abs" style="left:434.7px;top:487.23999999999995px;width:1px;height:62.72px;background:#e6e8ec"></div>
<div class="abs" style="left:517.4000000000001px;top:487.23999999999995px;width:1px;height:62.72px;background:#e6e8ec"></div>
<div class="abs" style="left:583.9000000000001px;top:487.23999999999995px;width:1px;height:62.72px;background:#e6e8ec"></div>
<div class="abs" style="left:778.7px;top:487.23999999999995px;width:1px;height:62.72px;background:#e6e8ec"></div>
<div class="abs" style="left:876.2px;top:487.23999999999995px;width:1px;height:62.72px;background:#e6e8ec"></div>
<div class="abs" style="left:940.9000000000001px;top:487.23999999999995px;width:1px;height:62.72px;background:#e6e8ec"></div>
<div class="abs" style="left:1039.2px;top:487.23999999999995px;width:1px;height:62.72px;background:#e6e8ec"></div>
<div class="abs" style="left:1140.9px;top:487.23999999999995px;width:1px;height:62.72px;background:#e6e8ec"></div>
<svg class="abs" style="left:1.1999999999999886px;top:506.73999999999995px" width="22" height="26"><path d="M10.35,24.96 L3.24,18.23 A10.35,10.35 0 1 1 17.46,18.23 Z" fill="#062867"/><circle cx="10.35" cy="10.6" r="5.4" fill="#fff"/></svg>
<div class="td2 abs" style="left:50.89999999999998px;top:495.54px"><span class="dt"><span class="l">2024/12/18</span><br><span class="l">12:24:12</span></span></div>
<div class="pill abs" style="left:155.2px;top:492.73999999999995px;background:#c9edbf;color:#58a33b">申込み中<svg width="12" height="8" style="position:absolute;left:84px;top:22px"><path d="M1,1L6,6L11,1" stroke="#58a33b" stroke-width="1.3" fill="none"/></svg></div>
<div class="td abs" style="left:277.2px;top:508.24px"><span class="l">10.0</span>万円</div>
<div class="td abs" style="left:364.90000000000003px;top:508.24px"><span class="l">2.0</span>万円</div>
<div class="td abs" style="left:447.7px;top:508.24px"><span class="l">30.0</span>坪</div>
<div class="td abs" style="left:530.4000000000001px;top:508.24px"><span class="l">1</span>階</div>
<div class="td abs" style="left:889.2px;top:508.24px"><span class="l">10</span>分</div>
<div class="td abs" style="left:953.9000000000001px;top:508.24px"><span class="l lx">XXXX</span></div>
<div class="td abs" style="left:1052.2px;top:508.24px">普通借家</div>
<div class="td2 abs" style="left:596.9000000000001px;top:495.54px">東京都渋谷区神宮前<span class="l lx">X</span>丁<br><span class="l lx">XXXXXX XXXXX</span></div>
<div class="td2 abs" style="left:791.7px;top:495.54px"><span class="l lx">XXXXX</span>線<br><span class="l lx">XXXX</span>駅</div>
<div class="memo abs" style="left:1146.6000000000001px;top:492.23999999999995px">編集可能テキスト編<br>集可能テキスト</div>
<div class="abs" style="left:0;top:549.96px;width:1400px;height:62.72px;background:#fff;border-top:1px solid #e6e8ec"></div>
<div class="abs" style="left:36.89999999999998px;top:549.96px;width:1px;height:62.72px;background:#e6e8ec"></div>
<div class="abs" style="left:149.39999999999998px;top:549.96px;width:1px;height:62.72px;background:#e6e8ec"></div>
<div class="abs" style="left:264.2px;top:549.96px;width:1px;height:62.72px;background:#e6e8ec"></div>
<div class="abs" style="left:351.90000000000003px;top:549.96px;width:1px;height:62.72px;background:#e6e8ec"></div>
<div class="abs" style="left:434.7px;top:549.96px;width:1px;height:62.72px;background:#e6e8ec"></div>
<div class="abs" style="left:517.4000000000001px;top:549.96px;width:1px;height:62.72px;background:#e6e8ec"></div>
<div class="abs" style="left:583.9000000000001px;top:549.96px;width:1px;height:62.72px;background:#e6e8ec"></div>
<div class="abs" style="left:778.7px;top:549.96px;width:1px;height:62.72px;background:#e6e8ec"></div>
<div class="abs" style="left:876.2px;top:549.96px;width:1px;height:62.72px;background:#e6e8ec"></div>
<div class="abs" style="left:940.9000000000001px;top:549.96px;width:1px;height:62.72px;background:#e6e8ec"></div>
<div class="abs" style="left:1039.2px;top:549.96px;width:1px;height:62.72px;background:#e6e8ec"></div>
<div class="abs" style="left:1140.9px;top:549.96px;width:1px;height:62.72px;background:#e6e8ec"></div>
<svg class="abs" style="left:1.1999999999999886px;top:569.46px" width="22" height="26"><path d="M10.35,24.96 L3.24,18.23 A10.35,10.35 0 1 1 17.46,18.23 Z" fill="#062867"/><circle cx="10.35" cy="10.6" r="5.4" fill="#fff"/></svg>
<div class="td2 abs" style="left:50.89999999999998px;top:558.26px"><span class="dt"><span class="l">2024/12/18</span><br><span class="l">12:24:12</span></span></div>
<div class="pill abs" style="left:155.2px;top:555.46px;background:#ffd4e6;color:#d8407f">契約交渉中<svg width="12" height="8" style="position:absolute;left:84px;top:22px"><path d="M1,1L6,6L11,1" stroke="#d8407f" stroke-width="1.3" fill="none"/></svg></div>
<div class="td abs" style="left:277.2px;top:570.96px"><span class="l">10.0</span>万円</div>
<div class="td abs" style="left:364.90000000000003px;top:570.96px"><span class="l">2.0</span>万円</div>
<div class="td abs" style="left:447.7px;top:570.96px"><span class="l">30.0</span>坪</div>
<div class="td abs" style="left:530.4000000000001px;top:570.96px"><span class="l">1</span>階</div>
<div class="td abs" style="left:889.2px;top:570.96px"><span class="l">10</span>分</div>
<div class="td abs" style="left:953.9000000000001px;top:570.96px"><span class="l lx">XXXX</span></div>
<div class="td abs" style="left:1052.2px;top:570.96px">普通借家</div>
<div class="td2 abs" style="left:596.9000000000001px;top:558.26px">東京都渋谷区神宮前<span class="l lx">X</span>丁<br><span class="l lx">XXXXXX XXXXX</span></div>
<div class="td2 abs" style="left:791.7px;top:558.26px"><span class="l lx">XXXXX</span>線<br><span class="l lx">XXXX</span>駅</div>
<div class="memo abs" style="left:1146.6000000000001px;top:554.96px">編集可能テキスト編<br>集可能テキスト</div>
<div class="abs" style="left:0;top:612.6800000000001px;width:1400px;height:62.72px;background:#fff;border-top:1px solid #e6e8ec"></div>
<div class="abs" style="left:36.89999999999998px;top:612.6800000000001px;width:1px;height:62.72px;background:#e6e8ec"></div>
<div class="abs" style="left:149.39999999999998px;top:612.6800000000001px;width:1px;height:62.72px;background:#e6e8ec"></div>
<div class="abs" style="left:264.2px;top:612.6800000000001px;width:1px;height:62.72px;background:#e6e8ec"></div>
<div class="abs" style="left:351.90000000000003px;top:612.6800000000001px;width:1px;height:62.72px;background:#e6e8ec"></div>
<div class="abs" style="left:434.7px;top:612.6800000000001px;width:1px;height:62.72px;background:#e6e8ec"></div>
<div class="abs" style="left:517.4000000000001px;top:612.6800000000001px;width:1px;height:62.72px;background:#e6e8ec"></div>
<div class="abs" style="left:583.9000000000001px;top:612.6800000000001px;width:1px;height:62.72px;background:#e6e8ec"></div>
<div class="abs" style="left:778.7px;top:612.6800000000001px;width:1px;height:62.72px;background:#e6e8ec"></div>
<div class="abs" style="left:876.2px;top:612.6800000000001px;width:1px;height:62.72px;background:#e6e8ec"></div>
<div class="abs" style="left:940.9000000000001px;top:612.6800000000001px;width:1px;height:62.72px;background:#e6e8ec"></div>
<div class="abs" style="left:1039.2px;top:612.6800000000001px;width:1px;height:62.72px;background:#e6e8ec"></div>
<div class="abs" style="left:1140.9px;top:612.6800000000001px;width:1px;height:62.72px;background:#e6e8ec"></div>
<svg class="abs" style="left:1.1999999999999886px;top:632.1800000000001px" width="22" height="26"><path d="M10.35,24.96 L3.24,18.23 A10.35,10.35 0 1 1 17.46,18.23 Z" fill="#062867"/><circle cx="10.35" cy="10.6" r="5.4" fill="#fff"/></svg>
<div class="td2 abs" style="left:50.89999999999998px;top:620.98px"><span class="dt"><span class="l">2024/12/18</span><br><span class="l">12:24:12</span></span></div>
<div class="pill abs" style="left:155.2px;top:618.1800000000001px;background:#c9f1f6;color:#2b9ccb">新着<svg width="12" height="8" style="position:absolute;left:84px;top:22px"><path d="M1,1L6,6L11,1" stroke="#2b9ccb" stroke-width="1.3" fill="none"/></svg></div>
<div class="td abs" style="left:277.2px;top:633.68px"><span class="l">10.0</span>万円</div>
<div class="td abs" style="left:364.90000000000003px;top:633.68px"><span class="l">2.0</span>万円</div>
<div class="td abs" style="left:447.7px;top:633.68px"><span class="l">30.0</span>坪</div>
<div class="td abs" style="left:530.4000000000001px;top:633.68px"><span class="l">1</span>階</div>
<div class="td abs" style="left:889.2px;top:633.68px"><span class="l">10</span>分</div>
<div class="td abs" style="left:953.9000000000001px;top:633.68px"><span class="l lx">XXXX</span></div>
<div class="td abs" style="left:1052.2px;top:633.68px">普通借家</div>
<div class="td2 abs" style="left:596.9000000000001px;top:620.98px">東京都渋谷区神宮前<span class="l lx">X</span>丁<br><span class="l lx">XXXXXX XXXXX</span></div>
<div class="td2 abs" style="left:791.7px;top:620.98px"><span class="l lx">XXXXX</span>線<br><span class="l lx">XXXX</span>駅</div>
<div class="memo abs" style="left:1146.6000000000001px;top:617.6800000000001px">編集可能テキスト編<br>集可能テキスト</div>
</div>
<div class="abs" style="left:1206.6px;top:186px;width:4.3px;height:171px;background:#8a93ad;border-radius:2px"></div>
<div class="abs" style="left:47.5px;top:772.7px;width:172px;height:4px;background:#b2a9cb;border-radius:2px"></div>
<div class="abs" style="left:1036.4px;top:726.5px;width:172px;height:48px;background:#fff;border:1.3px solid #a3aec3;box-shadow:0 1px 3px rgba(0,0,0,0.08);border-radius:3px"></div>
<svg class="abs" style="left:1054px;top:742px" width="18" height="18"><path d="M8.5,1.5V16M1.5,8.7H16" stroke="#9aa4ba" stroke-width="1.6" fill="none"/></svg>
<div class="abs" style="left:1079px;top:740.5px;font-size:15px;line-height:20px;font-weight:bold;color:#97a2b9;letter-spacing:0.5px;white-space:nowrap">物件情報を追加</div>
<div class="abs" style="left:765.5px;top:804px;font-size:13px;line-height:18px;color:#1f2a44;white-space:nowrap">表示件数</div>
<div class="abs" style="left:828.2px;top:794.2px;width:102.8px;height:39.5px;background:#fff;border:1.3px solid #b9b9b9;border-radius:4px"></div>
<div class="abs" style="left:833px;top:802px;font-size:18.5px;line-height:22px;color:#1f2a44;white-space:nowrap">100</div>
<svg class="abs" style="left:913px;top:802px" width="11" height="24"><path d="M1.5,5.5L5.5,1.8L9.5,5.5M1.5,17.5L5.5,21.2L9.5,17.5" stroke="#5a6c98" stroke-width="1.1" fill="none"/></svg>
<div class="abs" style="left:940.5px;top:803px;font-size:18px;line-height:21px;color:#1f2a44;letter-spacing:0.6px;white-space:nowrap">1-100 of 1,000</div>
<svg class="abs" style="left:1078px;top:803px" width="140" height="22"><g fill="none" stroke-width="1.5">
<path d="M5,4.2V16.7M15.8,4.2L9.5,10.5L15.8,16.7" stroke="#8a8a8a"/>
<path d="M52,4.2L46,10.5L52,16.7" stroke="#8a8a8a"/>
<path d="M86,4.2L92,10.5L86,16.7" stroke="#1d3b7c"/>
<path d="M123.5,4.2L129.8,10.5L123.5,16.7M133.2,4.2V16.7" stroke="#1d3b7c"/></g></svg>
</div>
<div class="abs" style="left:319.05px;top:155px;width:1.6px;height:754px;background:linear-gradient(180deg,#a088f3,#b39bf9);z-index:5"></div>
<svg class="abs" style="left:310px;top:70px;z-index:5" width="80" height="100"><defs><linearGradient id="tg" gradientUnits="userSpaceOnUse" x1="10" y1="20" x2="66" y2="86"><stop offset="0" stop-color="#4f68d6"/><stop offset="1" stop-color="#a45af6"/></linearGradient></defs>
<path d="M9.85,0V29.3H62.3A3,3 0 0 1 65.3,32.3V82.3A3,3 0 0 1 62.3,85.3H9.85V100" fill="#fff" stroke="url(#tg)" stroke-width="1.6"/></svg>
<svg class="abs" style="left:334px;top:114px;z-index:6" width="26" height="26"><defs><linearGradient id="ig" gradientUnits="userSpaceOnUse" x1="4" y1="4" x2="22" y2="22"><stop offset="0" stop-color="#2d5bb5"/><stop offset="1" stop-color="#9c4dff"/></linearGradient></defs><g fill="none" stroke="url(#ig)" stroke-width="1.5">
<path d="M15.2,4.3H22.2V22.2H4.4V15.2"/><path d="M4.4,7.3V4.3H7.4M9.3,4.3H12.3V7.3M4.4,9V12H7.4M9.3,12H12.3V9"/><path d="M20.6,19.7L14.3,14M17.9,14H14.3V17.7"/></g></svg>
</body>
</html>
